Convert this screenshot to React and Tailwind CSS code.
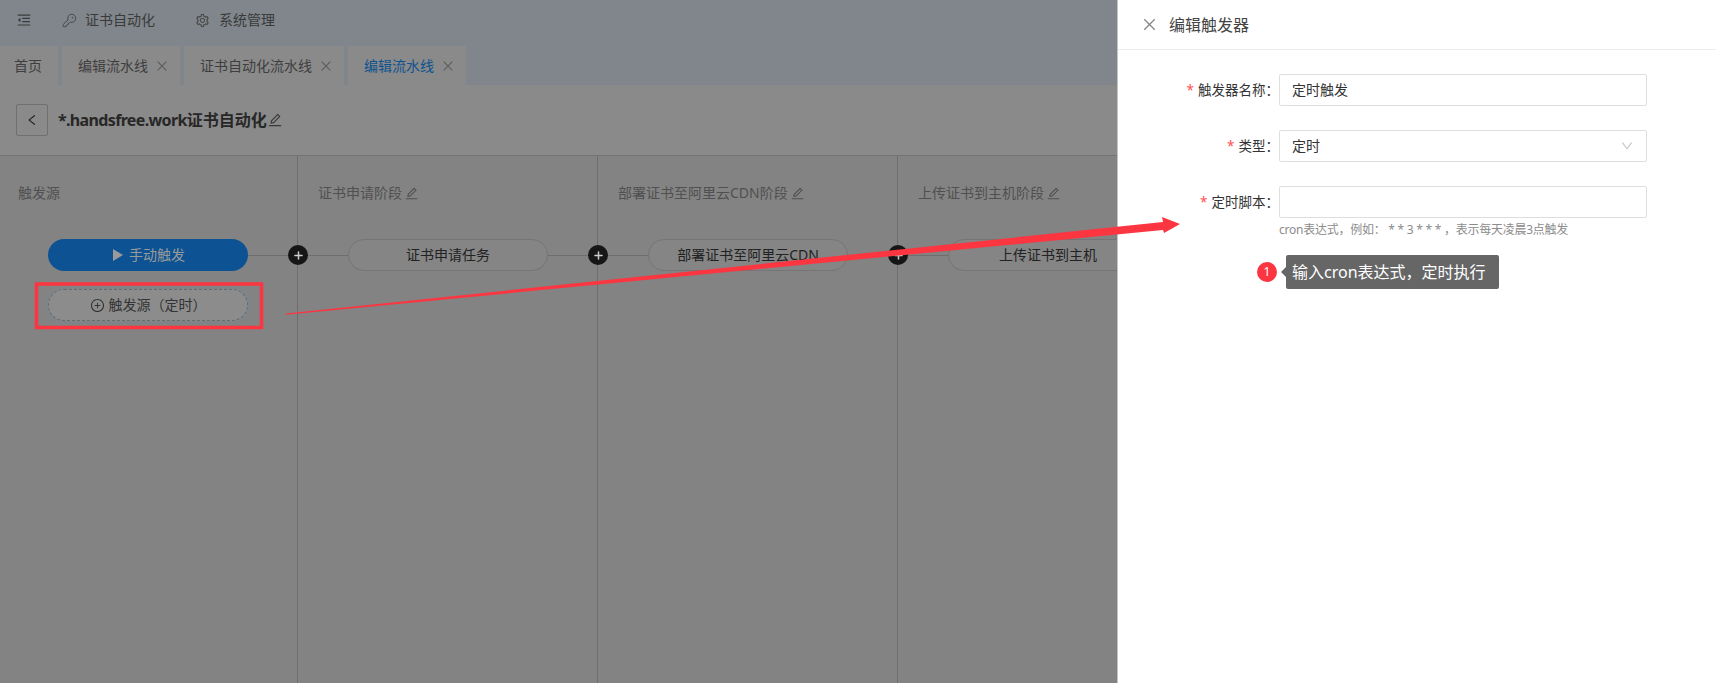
import React from 'react';
import { KeyRound } from 'lucide-react';
import {
  AiOutlineMenuFold,
  AiOutlineSetting,
  AiOutlineClose,
  AiOutlineLeft,
  AiOutlineDown,
  AiOutlineEdit,
  AiOutlinePlusCircle,
  AiOutlinePlus,
} from 'react-icons/ai';

const tabs = [
  { label: '首页', width: 'w-[58px]' },
  { label: '编辑流水线', width: 'w-[118px]', close: true },
  { label: '证书自动化流水线', width: 'w-[160px]', close: true },
  { label: '编辑流水线', width: 'w-[118px]', close: true, active: true },
];

const stages = [
  { title: '证书申请阶段', task: '证书申请任务' },
  { title: '部署证书至阿里云CDN阶段', task: '部署证书至阿里云CDN' },
  { title: '上传证书到主机阶段', task: '上传证书到主机' },
];

function Tab({ tab }) {
  return (
    <div
      className={`${tab.width} h-[39px] flex items-center gap-[7px] bg-[#8a8a8a] text-sm ${
        tab.close ? 'pl-4' : 'pl-[14px]'
      } ${tab.active ? 'text-[#0e5290]' : 'text-[#3e3e3e]'}`}
    >
      <span>{tab.label}</span>
      {tab.close && <AiOutlineClose className="text-[#5c5c5c] text-sm" />}
    </div>
  );
}

// the black plus on a column border, half over each column
function AddDot() {
  return (
    <div className="absolute left-[-10px] top-[89px] w-5 h-5 rounded-full bg-[#161616] flex items-center justify-center text-[#d0d0d0] z-10">
      <AiOutlinePlus className="text-[11px]" strokeWidth={60} />
    </div>
  );
}

function StageColumn({ stage }) {
  return (
    <div className="relative w-[300px] shrink-0 border-l border-[#6e6e6e]">
      <AddDot />
      <div className="h-[74px] pl-5 flex items-center text-sm text-[#505050]">
        <span>{stage.title}</span>
        <AiOutlineEdit className="ml-[2px] text-[15px]" />
      </div>
      <div className="relative h-8 mt-[9px] pl-[50px] flex items-center">
        <div className="absolute left-0 right-0 top-4 h-px bg-[#6e6e6e]" />
        <div className="relative w-[200px] h-8 rounded-2xl border border-[#757575] bg-[#858585] flex items-center justify-center text-sm text-[#222]">
          {stage.task}
        </div>
      </div>
    </div>
  );
}

function TriggerColumn() {
  return (
    <div className="w-[297px] shrink-0">
      <div className="h-[74px] pl-[18px] flex items-center text-sm text-[#505050]">触发源</div>
      <div className="relative h-8 mt-[9px] pl-12 flex items-center">
        <div className="absolute left-[200px] right-0 top-4 h-px bg-[#6e6e6e]" />
        <div className="relative w-[200px] h-8 rounded-2xl bg-[#0d5393] flex items-center justify-center gap-[6px] pl-[2px] text-sm text-[#9a9a9a]">
          <svg width="10" height="12" viewBox="0 0 10 12" fill="currentColor">
            <path d="M0 0 L10 6 L0 12 Z" />
          </svg>
          <span>手动触发</span>
        </div>
      </div>
      <div className="pl-12 mt-[18px]">
        <div className="w-[200px] h-8 rounded-2xl border border-dashed border-[#6a6a6a] bg-[#8c8c8c] shadow-[0_0_0_3px_#7f8489] flex items-center justify-center gap-1 text-sm text-[#333]">
          <AiOutlinePlusCircle className="text-[15px]" />
          <span>触发源（定时）</span>
        </div>
      </div>
    </div>
  );
}

function FormRow({ label, children, className }) {
  return (
    <div className={`flex ${className}`}>
      <div className="w-[161px] h-8 shrink-0 flex items-center justify-end text-[13.5px] text-[#333]">
        <span className="text-[#ff4d4f] mr-1">*</span>
        {label}：
      </div>
      <div className="w-[368px]">{children}</div>
    </div>
  );
}

function Field({ children }) {
  return (
    <div className="h-8 rounded-[2px] border border-[#dedede] bg-white px-3 flex items-center justify-between text-sm text-[#333]">
      {children}
    </div>
  );
}

function Drawer() {
  return (
    <aside className="absolute top-0 right-0 bottom-0 w-[599px] bg-white border-l border-[#c4c4c4] z-20">
      <div className="h-[50px] pl-[23px] flex items-center gap-[11px] border-b border-[#ececec] text-base text-[#444]">
        <AiOutlineClose className="text-[17px] text-[#888]" />
        <span>编辑触发器</span>
      </div>
      <div className="pt-6">
        <FormRow label="触发器名称">
          <Field>定时触发</Field>
        </FormRow>
        <FormRow label="类型" className="mt-6">
          <Field>
            <span>定时</span>
            <AiOutlineDown className="text-[#c4c4c4] text-sm" />
          </Field>
        </FormRow>
        <FormRow label="定时脚本" className="mt-6">
          <Field />
          <p className="mt-1 text-xs leading-4 tracking-[-0.25px] text-[#8c8c8c] whitespace-nowrap">
            cron表达式，例如： * * 3 * * * ，表示每天凌晨3点触发
          </p>
        </FormRow>
      </div>
      {/* numbered note beside the field */}
      <div className="absolute left-[139px] top-[255px] flex items-center">
        <div className="w-5 h-5 rounded-full bg-[#fb3640] text-white text-xs flex items-center justify-center">1</div>
        <div className="ml-1 w-0 h-0 border-y-[5px] border-y-transparent border-r-[5px] border-r-[#666]" />
        <div className="w-[213px] h-[34px] rounded-[2px] bg-[#666] pl-[6px] flex items-center text-base text-white whitespace-nowrap">
          输入cron表达式，定时执行
        </div>
      </div>
    </aside>
  );
}

export default function App() {
  return (
    <div
      className="relative w-[1716px] h-[683px] overflow-hidden bg-[#838383] text-[#333]"
      style={{ fontFamily: '"Noto Sans", "Noto Sans CJK SC", sans-serif' }}
    >
      <div className="h-[85px] bg-[#80868b]">
        <header className="h-10 flex items-center pl-4 text-sm text-[#3a3a3a]">
          <AiOutlineMenuFold className="text-base" />
          <KeyRound className="ml-[30px] text-[#444]" size={15} strokeWidth={1.5} />
          <span className="ml-[8px]">证书自动化</span>
          <AiOutlineSetting className="ml-10 text-[15px] text-[#444]" />
          <span className="ml-[9px]">系统管理</span>
        </header>
        <nav className="mt-[6px] flex gap-1">
          {tabs.map((tab, i) => (
            <Tab key={i} tab={tab} />
          ))}
        </nav>
      </div>

      <div className="h-[71px] bg-[#8a8a8a] border-b border-[#747474] pl-4 flex items-center">
        <button className="w-8 h-8 rounded-[2px] border border-[#707070] flex items-center justify-center text-[#222]">
          <AiOutlineLeft className="text-sm" />
        </button>
        <h1 className="ml-[10px] text-base font-bold text-[#272727]">
          <span className="tracking-[-0.65px]">*.handsfree.work</span>证书自动化
        </h1>
        <AiOutlineEdit className="text-base text-[#3a3a3a]" />
      </div>

      <div className="flex h-[527px]">
        <TriggerColumn />
        {stages.map(stage => (
          <StageColumn key={stage.title} stage={stage} />
        ))}
      </div>

      <Drawer />

      {/* annotation: red frame and arrow drawn over the screenshot */}
      <svg className="absolute inset-0 z-30 pointer-events-none" width="1716" height="683" viewBox="0 0 1716 683">
        <rect x="36.5" y="284" width="225" height="43.5" fill="none" stroke="#fb3640" strokeWidth="3.5" />
        <polygon points="286,313.5 1163,222 1162,217 1180,224 1164,233 1163,230 286,314.8" fill="#fb3640" />
      </svg>
    </div>
  );
}
